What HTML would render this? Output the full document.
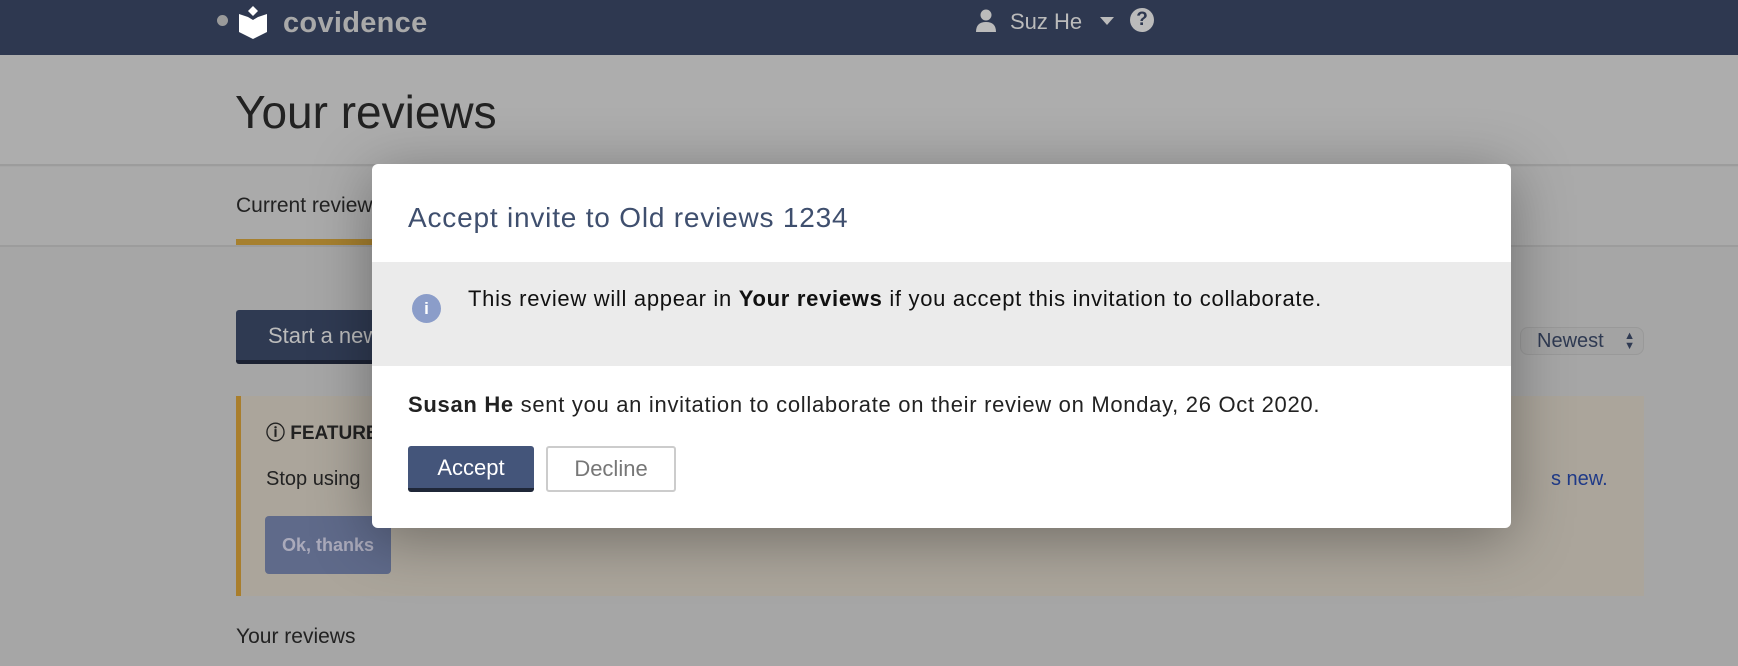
<!DOCTYPE html>
<html><head><meta charset="utf-8"><style>
*{box-sizing:border-box;margin:0;padding:0}
body{width:1738px;height:666px;overflow:hidden;background:#a6a6a6;font-family:"Liberation Sans",sans-serif;position:relative}
.nav{position:absolute;left:0;top:0;width:1738px;height:55px;background:#2e3850}
.hdr{position:absolute;left:0;top:55px;width:1738px;height:111px;background:#adadad;border-bottom:2px solid #9c9c9c}
.tabs{position:absolute;left:0;top:167px;width:1738px;height:80px;background:#aaaaaa;border-bottom:2px solid #9c9c9c}
.abs{position:absolute;white-space:nowrap}
.modal{position:absolute;left:372px;top:164px;width:1139px;height:364px;background:#fff;border-radius:6px;box-shadow:0 10px 60px rgba(0,0,0,.35)}
</style></head><body>
<div class="nav">
 <div class="abs" style="left:217px;top:15px;width:11px;height:11px;border-radius:50%;background:#9a9a9a"></div>
 <svg class="abs" style="left:238px;top:5px" width="30" height="34" viewBox="0 0 30 34"><path d="M15 1 L20 6 L15 11 L10 6Z" fill="#fff"/><path d="M1 9 L10 12 L15 15 L20 12 L29 9 L29 27 L15 34 L1 27Z" fill="#fff"/></svg>
 <div class="abs" style="left:283px;top:7px;font-size:29px;font-weight:bold;color:#a9a9a9;letter-spacing:0.3px">covidence</div>
 <svg class="abs" style="left:975px;top:9px" width="22" height="24" viewBox="0 0 22 24"><circle cx="11" cy="6" r="5.5" fill="#bbb"/><path d="M1 23 Q1 13 11 13 Q21 13 21 23Z" fill="#bbb"/></svg>
 <div class="abs" style="left:1010px;top:9px;font-size:22px;color:#bbb">Suz He</div>
 <svg class="abs" style="left:1100px;top:17px" width="14" height="9"><path d="M0 0H14L7 8Z" fill="#bbb"/></svg>
 <div class="abs" style="left:1130px;top:8px;width:24px;height:24px;border-radius:50%;background:#bbb;color:#2e3850;font-size:19px;font-weight:bold;text-align:center;line-height:24px">?</div>
</div>
<div class="hdr"><div class="abs" style="left:235px;top:30px;font-size:46px;color:#222;font-weight:300">Your reviews</div></div>
<div class="tabs"><div class="abs" style="left:236px;top:27px;font-size:21px;color:#222">Current reviews</div>
<div class="abs" style="left:236px;top:72px;width:140px;height:6px;background:#a6802f"></div></div>
<div class="abs" style="left:236px;top:310px;width:180px;height:54px;background:#2f3a52;border-bottom:4px solid #1c2233;border-radius:3px;color:#bbb;font-size:22px;padding:13px 32px;overflow:hidden">Start a new review</div>
<div class="abs" style="left:1520px;top:327px;width:124px;height:28px;background:#a3a3a3;border-radius:8px;border:1px solid #999;color:#2f3a52;font-size:20px;padding:2px 0 0 16px">Newest<span style="position:absolute;right:8px;top:3px;font-size:11px;line-height:10px">▲<br>▼</span></div>
<div class="abs" style="left:236px;top:396px;width:1408px;height:200px;background:#aba59b;border-left:5px solid #a97e2c">
 <div class="abs" style="left:25px;top:22px;font-size:19px;font-weight:bold;color:#222">ⓘ FEATURE</div>
 <div class="abs" style="left:25px;top:72px;font-size:20px;color:#222">Stop using</div>
 <div class="abs" style="left:1310px;top:72px;font-size:20px;color:#1f3a88">s new.</div>
 <div class="abs" style="left:24px;top:120px;width:126px;height:58px;background:#5f6a8a;border-radius:4px;color:#aab;font-size:18px;font-weight:bold;text-align:center;line-height:58px">Ok, thanks</div>
</div>
<div class="abs" style="left:236px;top:625px;font-size:21px;color:#222">Your reviews</div>
<div class="modal">
 <div class="abs" style="left:36px;top:38px;font-size:28px;letter-spacing:0.8px;color:#3f4f6e">Accept invite to Old reviews 1234</div>
 <div class="abs" style="left:0;top:98px;width:1139px;height:104px;background:#ebebeb">
  <div class="abs" style="left:40px;top:32px;width:29px;height:29px;border-radius:50%;background:#8b9dc9;color:#fff;font-size:17px;font-weight:bold;text-align:center;line-height:29px">i</div>
  <div class="abs" style="left:96px;top:24px;font-size:22px;letter-spacing:0.7px;color:#111">This review will appear in <b>Your reviews</b> if you accept this invitation to collaborate.</div>
 </div>
 <div class="abs" style="left:36px;top:228px;font-size:22px;letter-spacing:0.7px;color:#222"><b>Susan He</b> sent you an invitation to collaborate on their review on Monday, 26 Oct 2020.</div>
 <div class="abs" style="left:36px;top:282px;width:126px;height:46px;background:#44557a;border-bottom:4px solid #1f2738;border-radius:3px;color:#fff;font-size:22px;text-align:center;line-height:44px">Accept</div>
 <div class="abs" style="left:174px;top:282px;width:130px;height:46px;border:2px solid #ccc;border-radius:3px;color:#777;font-size:22px;text-align:center;line-height:42px">Decline</div>
</div>
</body></html>
